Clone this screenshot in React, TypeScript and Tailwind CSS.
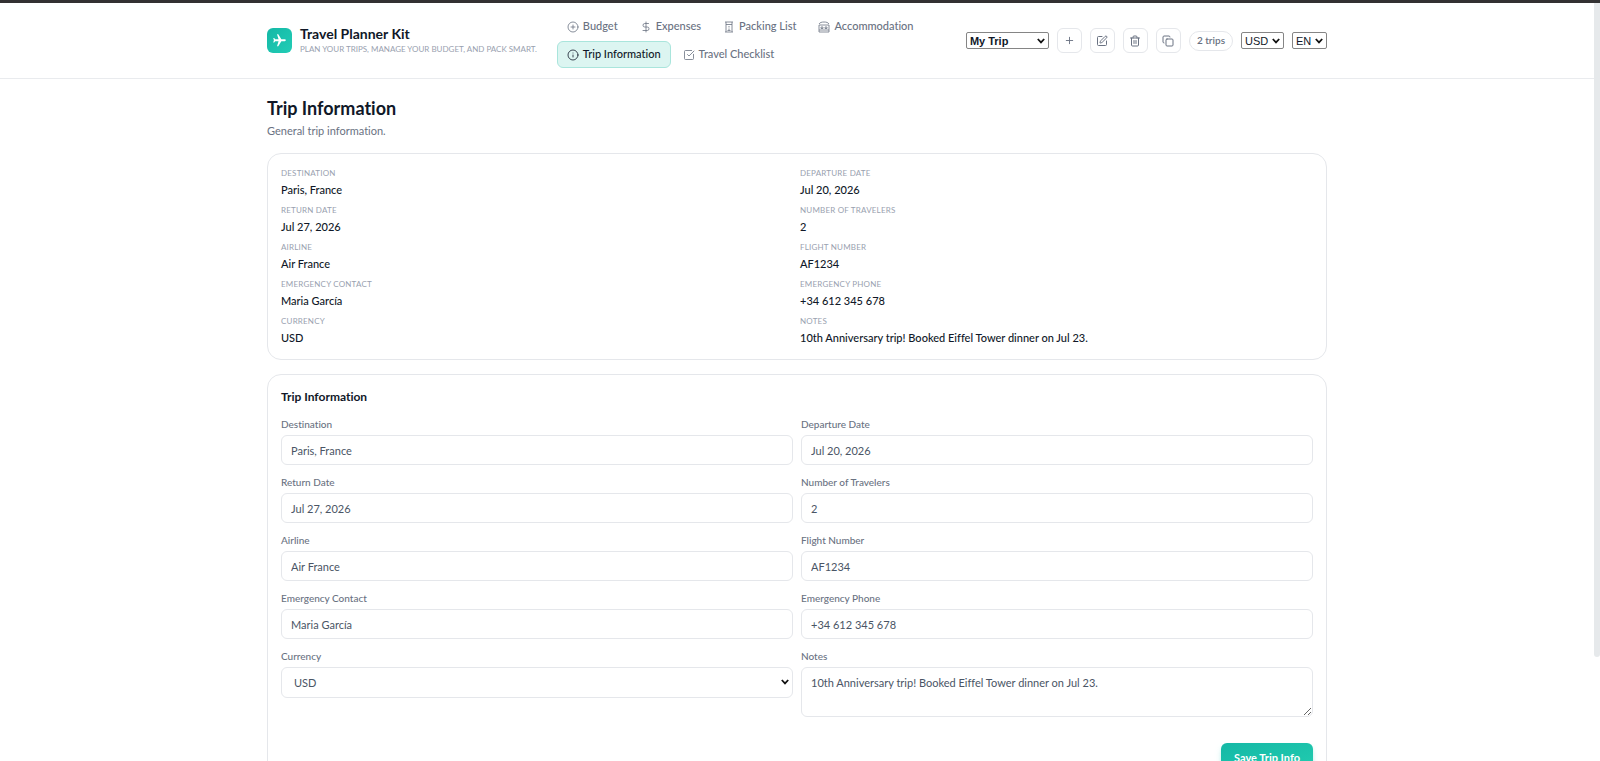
import { CirclePlus, Copy, DollarSign, Info, Plus, SquareCheckBig, SquarePen, Trash2 } from 'lucide-react';
import { ReactNode } from 'react';
import { MdFlight } from 'react-icons/md';

interface NavItem {
  label: string;
  icon: ReactNode;
  active?: boolean;
}

interface Field {
  id: string;
  label: string;
  value: string;
  type?: 'text' | 'select' | 'textarea';
}

function PackingIcon() {
  return (
    <svg width="12" height="12" viewBox="0 0 24 24" fill="none" stroke="currentColor" strokeWidth="1.6">
      <path d="M4 2h16M4 22h16M6 2v20M18 2v20M6 7h12M12 10v3M12 15v3M9 19h6" />
    </svg>
  );
}

function HotelIcon() {
  return (
    <svg width="12" height="12" viewBox="0 0 24 24" fill="none" stroke="currentColor" strokeWidth="1.6">
      <path d="M2 6c2-3 5-4 10-4s8 1 10 4M2 8h20v14H2zM2 18h20" />
      <path d="M6 12h4v3H6zM14 12h4v3h-4z" />
    </svg>
  );
}

const navItems: NavItem[] = [
  { label: 'Budget', icon: <CirclePlus size={12} strokeWidth={1.6} /> },
  { label: 'Expenses', icon: <DollarSign size={12} strokeWidth={1.6} /> },
  { label: 'Packing List', icon: <PackingIcon /> },
  { label: 'Accommodation', icon: <HotelIcon /> },
  { label: 'Trip Information', icon: <Info size={12} strokeWidth={1.6} />, active: true },
  { label: 'Travel Checklist', icon: <SquareCheckBig size={12} strokeWidth={1.6} /> },
];

const tripActions = [
  { label: 'New trip', icon: <Plus size={11} /> },
  { label: 'Rename trip', icon: <SquarePen size={12} /> },
  { label: 'Delete trip', icon: <Trash2 size={12} /> },
  { label: 'Duplicate trip', icon: <Copy size={12} /> },
];

const fields: Field[] = [
  { id: 'destination', label: 'Destination', value: 'Paris, France' },
  { id: 'departure', label: 'Departure Date', value: 'Jul 20, 2026' },
  { id: 'return', label: 'Return Date', value: 'Jul 27, 2026' },
  { id: 'travelers', label: 'Number of Travelers', value: '2' },
  { id: 'airline', label: 'Airline', value: 'Air France' },
  { id: 'flight', label: 'Flight Number', value: 'AF1234' },
  { id: 'contact', label: 'Emergency Contact', value: 'Maria García' },
  { id: 'phone', label: 'Emergency Phone', value: '+34 612 345 678' },
  { id: 'currency', label: 'Currency', value: 'USD', type: 'select' },
  { id: 'notes', label: 'Notes', value: '10th Anniversary trip! Booked Eiffel Tower dinner on Jul 23.', type: 'textarea' },
];

const inputClass = 'w-full rounded-md border border-gray-200 bg-white text-[11px] text-gray-600 outline-none';

function Caret({ className }: { className: string }) {
  return (
    <svg viewBox="0 0 8 6" fill="none" stroke="#111" strokeWidth="1.8" className={`pointer-events-none absolute h-[6px] w-[8px] ${className}`}>
      <path d="M0.8 1 4 4.4 7.2 1" />
    </svg>
  );
}

function HeaderSelect({ label, value, className }: { label: string; value: string; className: string }) {
  return (
    <div className={`relative h-[17px] ${className}`}>
      <select
        aria-label={label}
        className="block h-full w-full appearance-none rounded-[2px] border border-[#858585] bg-white pl-[3px] font-['Liberation_Sans',Arial,sans-serif] text-[11px] leading-[14px] text-gray-900"
      >
        <option>{value}</option>
      </select>
      <Caret className="top-[6px] right-[4px]" />
    </div>
  );
}

function Header() {
  return (
    <header className="border-b border-[#e9ebee] bg-white">
      <div className="mx-auto flex max-w-[1100px] items-center px-5 py-[10px]">
        <div className="flex shrink-0 items-center gap-2">
          <div className="flex h-[25px] w-[25px] items-center justify-center rounded-md bg-linear-to-br from-[#14b8a6] to-[#22cdb6] text-white">
            <MdFlight size={15} className="rotate-90" />
          </div>
          <div>
            <p className="text-sm leading-4 font-bold text-gray-900">Travel Planner Kit</p>
            <p className="text-[8px] leading-[14px] text-gray-400 uppercase">
              Plan your trips, manage your budget, and pack smart.
            </p>
          </div>
        </div>

        <nav className="ml-5 flex min-w-0 flex-1 flex-wrap gap-x-0.5 gap-y-px">
          {navItems.map((item) => (
            <a
              key={item.label}
              href="#"
              className={
                item.active
                  ? 'flex h-[27px] items-center gap-1 rounded-md border border-[#a9e5dc] bg-[#dcf5f1] px-[9px] text-[11px] font-medium text-gray-900'
                  : 'flex h-[27px] items-center gap-1 rounded-md border border-transparent px-[9px] text-[11px] font-medium text-gray-500'
              }
            >
              {item.icon}
              {item.label}
            </a>
          ))}
        </nav>

        <div className="ml-4 flex shrink-0 items-center gap-2">
          <HeaderSelect label="Trip" value="My Trip" className="w-[83px] *:font-bold" />
          {tripActions.map((action) => (
            <button
              key={action.label}
              aria-label={action.label}
              className="flex h-[25px] w-[25px] items-center justify-center rounded-md border border-gray-200 bg-white text-gray-500"
            >
              {action.icon}
            </button>
          ))}
          <span className="flex h-5 items-center rounded-full border border-gray-200 px-[7px] text-[10px] font-semibold text-gray-500">
            2 trips
          </span>
          <HeaderSelect label="Currency" value="USD" className="w-[43px]" />
          <HeaderSelect label="Language" value="EN" className="w-[35px]" />
        </div>
      </div>
    </header>
  );
}

function TripSummary() {
  return (
    <dl className="grid grid-cols-2 gap-x-1.5 gap-y-1.5 rounded-[14px] border border-gray-200 bg-white p-[13px]">
      {fields.map((field) => (
        <div key={field.id}>
          <dt className="mb-0.5 text-[8px] leading-[13px] tracking-wide text-gray-400 uppercase">{field.label}</dt>
          <dd className="text-[11px] leading-4 font-medium text-gray-900">{field.value}</dd>
        </div>
      ))}
    </dl>
  );
}

function FieldControl({ field }: { field: Field }) {
  if (field.type === 'select') {
    return (
      <div className="relative">
        <select id={field.id} className={`${inputClass} h-[31px] appearance-none pt-0.5 pl-3`}>
          <option>{field.value}</option>
        </select>
        <Caret className="top-[12px] right-[4px]" />
      </div>
    );
  }
  if (field.type === 'textarea') {
    return (
      <textarea id={field.id} defaultValue={field.value} className={`${inputClass} block h-[50px] resize-y px-[9px] py-[7px] leading-4`} />
    );
  }
  return <input id={field.id} defaultValue={field.value} className={`${inputClass} h-[30px] px-[9px]`} />;
}

function TripForm() {
  return (
    <form className="mt-[14px] rounded-[14px] border border-gray-200 bg-white px-[13px] py-[14px]">
      <h2 className="mb-3 text-xs leading-4 font-bold text-gray-900">Trip Information</h2>
      <div className="grid grid-cols-2 gap-x-2 gap-y-[10px]">
        {fields.map((field) => (
          <div key={field.id}>
            <label htmlFor={field.id} className="mb-[3px] block text-[10px] leading-[15px] font-medium text-gray-500">
              {field.label}
            </label>
            <FieldControl field={field} />
          </div>
        ))}
      </div>
      <div className="mt-[26px] flex justify-end">
        <button
          type="button"
          className="h-[30px] rounded-md bg-linear-to-br from-[#14b8a6] to-[#22cdb0] px-[13px] text-[11px] font-bold text-white shadow-md shadow-teal-500/25"
        >
          Save Trip Info
        </button>
      </div>
    </form>
  );
}

export default function App() {
  return (
    <div className="flex h-screen flex-col overflow-hidden border-t-3 border-[#333132] bg-white font-['Lato','Noto_Sans',sans-serif] [font-variant-ligatures:none]">
      <div className="flex min-h-0 flex-1">
        <div className="min-w-0 flex-1 overflow-hidden">
          <Header />
          <main className="mx-auto max-w-[1100px] px-5 pt-[17px] pb-10">
            <h1 className="text-lg leading-6 font-bold text-gray-900">Trip Information</h1>
            <p className="mt-[3px] mb-[14px] text-[11px] leading-4 text-gray-500">General trip information.</p>
            <TripSummary />
            <TripForm />
          </main>
        </div>
        <div className="w-1.5 shrink-0">
          <div className="h-[654px] max-h-full rounded-b-sm bg-[#e6e9eb]" />
        </div>
      </div>
    </div>
  );
}
